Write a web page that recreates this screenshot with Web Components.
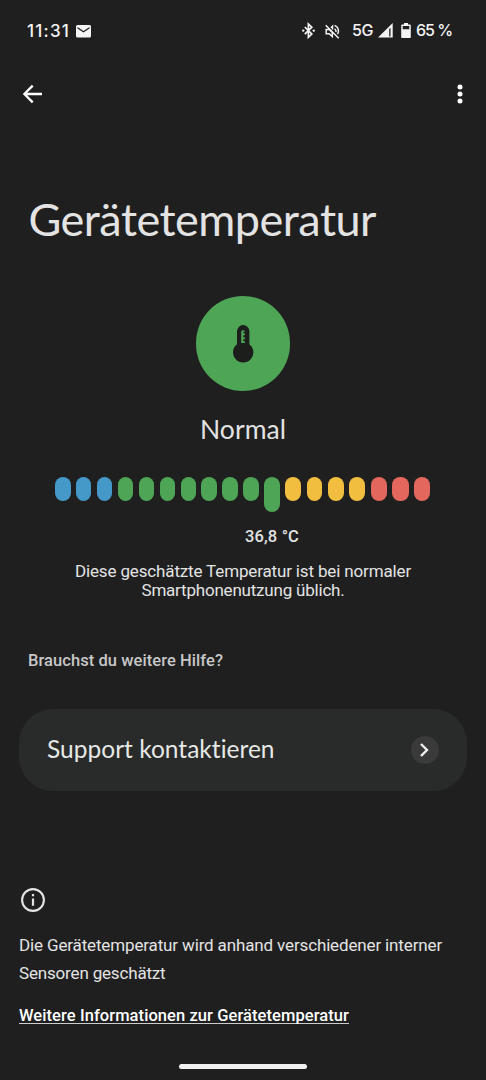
<!DOCTYPE html>
<html lang="de">
<head>
<meta charset="utf-8">
<title>Gerätetemperatur</title>
<style>
  html, body {
    margin: 0;
    height: 100%;
    background: #1f1f1f;
    overflow: hidden;
  }
</style>
</head>
<body>
<temperature-screen></temperature-screen>

<script>
'use strict';
(function () {

const icons = {
  mail: '<path fill-rule="evenodd" d="M1.5 0h12A1.5 1.5 0 0 1 15 1.5v9.500a1.500 1.500 0 0 1-1.500 1.500h-12A1.500 1.500 0 0 1 0 11V1.500A1.500 1.500 0 0 1 1.500 0zM1.500 2.100v1.500l6 3.800 6-3.800V2.100l-6 3.800z"/>',
  back: '<path d="M19 10H2.300M9.700 1.600 1.400 10l8.300 8.400" fill="none" stroke="currentColor" stroke-width="2.300"/>',
  more: '<circle cx="3" cy="3" r="2.500"/><circle cx="3" cy="10" r="2.500"/><circle cx="3" cy="17" r="2.500"/>',
  bluetooth: '<path d="M2.800 4l7 7-3.400 3.300V.900L9.800 4.200l-7 7" fill="none" stroke="currentColor" stroke-width="1.700"/><circle cx="1.200" cy="7.600" r="1.200"/><circle cx="11.800" cy="7.600" r="1.200"/>',
  muted: '<path d="M.700 1.200 13.700 14.200M1.200 5.400h3L7.300 8.500v4.100L4.200 9.700h-3zM5.900 3.700l1.600-1.500v3.200M9.600 4.900c1 .700 1.600 1.700 1.500 3.200M9.600 1.500c3.500 1.100 5 5.300 2.900 8.700" fill="none" stroke="currentColor" stroke-width="1.500"/>',
  signal: '<path fill-rule="evenodd" d="M0 14.500 14.700 0v14.500zM11.200 6v7.500h1.300V4.800z"/>',
  battery: '<path fill-rule="evenodd" d="M3 0h4v1.500h1.700c.700 0 1.100.400 1.100 1.100v11.300c0 .700-.400 1.100-1.100 1.100H1.300C.600 15 .200 14.600.200 13.900V2.600c0-.700.400-1.100 1.100-1.100H3zM1.700 3v3.200h6.600V3z"/>',
  thermometer: '<path fill-rule="evenodd" d="M4 6.300a6.200 6.200 0 0 1 12.400 0v13a10.200 10.200 0 1 1-12.400 0zM9.700 5.200a1.500 1.500 0 0 0-1.500 1.500v11.400h3.700v-1.800h-1.600v-2h1.600v-2h-1.600v-2h1.600v-2h-1.600v-1.500h1.600V6.700a1.500 1.500 0 0 0-1.500-1.500z"/>',
  chevron: '<path d="M1 1l6 6-6 6" fill="none" stroke="currentColor" stroke-width="2.400"/>',
  info: '<circle cx="12" cy="12" r="10.900" fill="none" stroke="currentColor" stroke-width="2.100"/><path d="M10.900 6h2.200v2.200h-2.200zM10.900 10.600h2.200v7.200h-2.200z"/>'
};

const sizes = {
  mail: [15, 12.5], back: [20, 20], more: [6, 20], bluetooth: [13, 15.2],
  muted: [15, 15], signal: [15, 14.5], battery: [10, 15],
  thermometer: [20.4, 39], chevron: [9, 14], info: [24, 24]
};

class UiIcon extends HTMLElement {
  constructor() {
    super();
    this.attachShadow({mode: 'open'});
  }

  connectedCallback() {
    const name = this.getAttribute('name');
    const [w, h] = sizes[name];
    this.shadowRoot.innerHTML = `
      <style>
        :host { display: block; flex: none; width: ${w}px; height: ${h}px; }
        svg { display: block; overflow: visible; }
      </style>
      <svg width="${w}" height="${h}" viewBox="0 0 ${w} ${h}" fill="currentColor">${icons[name]}</svg>
    `;
  }
}
customElements.define('ui-icon', UiIcon);

// one line of text, tracked so that it fills the width attribute
class FitText extends HTMLElement {
  constructor() {
    super();
    this.attachShadow({mode: 'open'}).innerHTML = `
      <style>
        :host { display: block; white-space: nowrap; flex: none; }
        span { display: inline-block; }
      </style>
      <span><slot></slot></span>
    `;
  }

  connectedCallback() {
    const width = Number(this.getAttribute('width'));
    const span = this.shadowRoot.querySelector('span');
    const count = this.textContent.length;
    const natural = span.getBoundingClientRect().width;
    span.style.letterSpacing = (width - natural) / count + 'px';
  }
}

class StatusBar extends HTMLElement {
  constructor() {
    super();
    this.attachShadow({mode: 'open'}).innerHTML = `
      <style>
        :host {
          display: flex;
          align-items: center;
          height: 61px;
          padding: 0 34px 0 27px;
          box-sizing: border-box;
          color: #f4f4f4;
          font: 500 16px/20px Inter, sans-serif;
        }
        .time { font-size: 17px; }
        .right { display: flex; align-items: center; margin-left: auto; }
        .right fit-text { margin-bottom: 1px; }
        .mail { margin: 1px 0 0 6px; }
        .muted { margin: 1px 12px 0 10px; }
        .signal { margin: 0 8px 0 5px; }
        .battery { margin-right: 5px; }
      </style>
      <fit-text class="time" width="43">11:31</fit-text>
      <ui-icon class="mail" name="mail"></ui-icon>
      <div class="right">
        <ui-icon name="bluetooth"></ui-icon>
        <ui-icon class="muted" name="muted"></ui-icon>
        <fit-text width="21">5G</fit-text>
        <ui-icon class="signal" name="signal"></ui-icon>
        <ui-icon class="battery" name="battery"></ui-icon>
        <fit-text width="36">65 %</fit-text>
      </div>
    `;
  }
}
customElements.define('status-bar', StatusBar);

class AppBar extends HTMLElement {
  constructor() {
    super();
    this.attachShadow({mode: 'open'}).innerHTML = `
      <style>
        :host {
          display: flex;
          align-items: center;
          justify-content: space-between;
          height: 66px;
          padding: 0 23px;
          color: #fff;
        }
      </style>
      <ui-icon name="back"></ui-icon>
      <ui-icon name="more"></ui-icon>
    `;
  }
}
customElements.define('app-bar', AppBar);

class TemperatureScale extends HTMLElement {
  constructor() {
    super();
    this.attachShadow({mode: 'open'});
  }

  connectedCallback() {
    const active = Number(this.getAttribute('active'));
    const zones = [['cold', 3], ['normal', 8], ['warm', 4], ['hot', 3]];
    const pills = zones.flatMap(([zone, n]) => Array(n).fill(zone));

    this.shadowRoot.innerHTML = `
      <style>
        :host { display: flex; gap: 5.5px; height: 36px; }
        i { flex: none; width: 15.4px; height: 24px; border-radius: 8px; }
        .cold { background: #4599c8; }
        .normal { background: #4ea556; }
        .warm { background: #f2be3f; width: 15.8px; }
        .hot { background: #e3675c; width: 16.3px; }
        .active { height: 35.5px; width: 15.8px; }
      </style>
      ${pills.map((zone, i) => `<i class="${zone}${i === active ? ' active' : ''}"></i>`).join('')}
    `;
  }
}
customElements.define('temperature-scale', TemperatureScale);

class SupportCard extends HTMLElement {
  constructor() {
    super();
    this.attachShadow({mode: 'open'}).innerHTML = `
      <style>
        :host {
          display: flex;
          align-items: center;
          justify-content: space-between;
          box-sizing: border-box;
          height: 82px;
          padding: 0 28.5px 0 28px;
          border-radius: 34px;
          background: #292b2a;
          color: #e6e8e6;
          font: 400 24.5px/30px Lato, sans-serif;
        }
        ::slotted(*) { margin-bottom: 2px; }
        .go {
          display: grid;
          place-items: center;
          width: 28px;
          height: 28px;
          border-radius: 50%;
          background: #3a3a3a;
          color: #f0f0f0;
        }
      </style>
      <slot></slot>
      <div class="go"><ui-icon name="chevron"></ui-icon></div>
    `;
  }
}
customElements.define('support-card', SupportCard);

class TemperatureScreen extends HTMLElement {
  constructor() {
    super();
    this.attachShadow({mode: 'open'}).innerHTML = `
      <style>
        :host {
          display: flex;
          flex-direction: column;
          width: 486px;
          height: 1080px;
          background: #1f1f1f;
          color: #e3e3e3;
          font: 400 17px/19px Roboto, sans-serif;
        }
        .title { margin: 65px 0 0 28.5px; font: 400 45px/54px Lato, sans-serif; }
        .badge {
          display: grid;
          place-items: center;
          align-self: center;
          width: 94.5px;
          height: 94.5px;
          margin-top: 50.3px;
          border-radius: 50%;
          background: #4ea556;
          color: #1c1e1c;
        }
        .badge ui-icon { margin-top: 2px; }
        .state { align-self: center; margin-top: 22px; font: 400 26.5px/32px Lato, sans-serif; }
        .scale { margin: 31.9px 0 0 55.2px; }
        .value { margin: 14px 0 0 245px; font-weight: 500; font-size: 16.5px; }
        .hint { display: flex; flex-direction: column; align-items: center; margin-top: 16.3px; line-height: 19px; }
        .help { margin: 51.5px 0 0 28px; font-weight: 500; font-size: 16.5px; color: #c7c7c7; }
        .card { margin: 39px 19px 0; }
        footer { margin: 96.5px 0 0 19px; }
        .info { margin-left: 2px; }
        .about { margin-top: 19px; line-height: 28.5px; }
        .link {
          width: 330px;
          height: 16.5px;
          margin-top: 18.7px;
          font-weight: 500;
          font-size: 16.5px;
          line-height: 18px;
          color: #fff;
          border-bottom: 1px solid #ccc;
        }
        .nav { align-self: center; width: 128px; height: 5px; margin: auto 0 11.5px; border-radius: 3px; background: #f1f1f1; }
      </style>
      <status-bar></status-bar>
      <app-bar></app-bar>
      <fit-text class="title" width="347.5">Gerätetemperatur</fit-text>
      <div class="badge"><ui-icon name="thermometer"></ui-icon></div>
      <fit-text class="state" width="86">Normal</fit-text>
      <temperature-scale class="scale" active="10"></temperature-scale>
      <fit-text class="value" width="54">36,8 °C</fit-text>
      <div class="hint">
        <fit-text width="336">Diese geschätzte Temperatur ist bei normaler</fit-text>
        <fit-text width="203">Smartphonenutzung üblich.</fit-text>
      </div>
      <fit-text class="help" width="195">Brauchst du weitere Hilfe?</fit-text>
      <support-card class="card"><fit-text width="228">Support kontaktieren</fit-text></support-card>
      <footer>
        <ui-icon class="info" name="info"></ui-icon>
        <div class="about">
          <fit-text width="423">Die Gerätetemperatur wird anhand verschiedener interner</fit-text>
          <fit-text width="146.5">Sensoren geschätzt</fit-text>
        </div>
        <fit-text class="link" width="330">Weitere Informationen zur Gerätetemperatur</fit-text>
      </footer>
      <div class="nav"></div>
    `;
  }
}
customElements.define('temperature-screen', TemperatureScreen);

// last, so that the lines are measured with every host style in place
customElements.define('fit-text', FitText);
})();
</script>
</body>
</html>
